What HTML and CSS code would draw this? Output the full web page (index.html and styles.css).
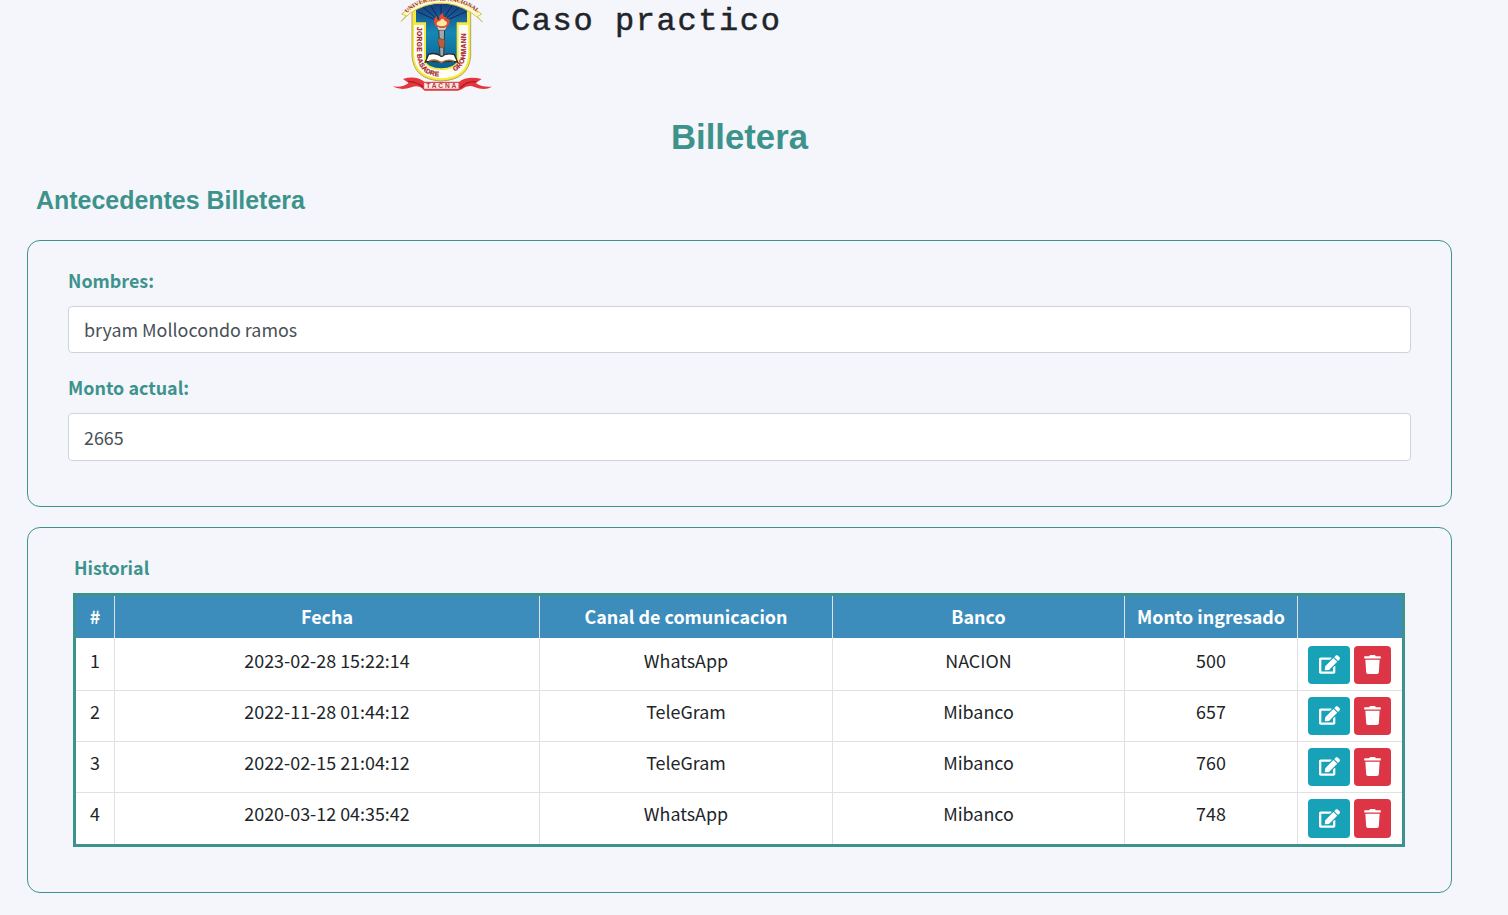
FILE: index.html
```html
<!DOCTYPE html>
<html lang="es">
<head>
<meta charset="utf-8">
<title>Billetera</title>
<link rel="stylesheet" href="styles.css">
</head>
<body>
<svg class="sprite" aria-hidden="true">
  <symbol id="edit" viewBox="0 0 576 512"><path d="M402.600 83.200l90.200 90.200c3.800 3.800 3.800 10 0 13.800L274.400 405.600l-92.800 10.300c-12.400 1.400-22.900-9.100-21.500-21.500l10.300-92.800L388.800 83.200c3.800-3.800 10-3.800 13.800 0zm162-22.900l-48.800-48.800c-15.200-15.200-39.900-15.200-55.200 0l-35.400 35.400c-3.800 3.800-3.800 10 0 13.800l90.200 90.200c3.800 3.800 10 3.800 13.800 0l35.400-35.400c15.200-15.300 15.200-40 0-55.200zM384 346.200V448H64V128h229.800c3.200 0 6.200-1.300 8.500-3.500l40-40c7.600-7.600 2.200-20.500-8.500-20.500H48C21.500 64 0 85.500 0 112v352c0 26.500 21.500 48 48 48h352c26.500 0 48-21.500 48-48V306.200c0-10.700-12.900-16-20.500-8.500l-40 40c-2.200 2.300-3.500 5.300-3.500 8.500z"/></symbol>
  <symbol id="trash" viewBox="0 0 448 512"><path d="M432 32H312l-9.400-18.700A24 24 0 0 0 281.100 0H166.800a23.700 23.700 0 0 0-21.400 13.300L136 32H16A16 16 0 0 0 0 48v32a16 16 0 0 0 16 16h416a16 16 0 0 0 16-16V48a16 16 0 0 0-16-16zM53.200 467a48 48 0 0 0 47.900 45h245.800a48 48 0 0 0 47.900-45L416 128H32z"/></symbol>
</svg>
<header class="top">
  <svg class="crest" viewBox="0 0 345 300">
    <defs>
      <path id="arcTop" d="M66 40Q100 2 168 2Q240 2 279 40"/>
      <path id="arcName" d="M96 81V164Q101 229 168 229Q182 229 196 224"/>
      <path id="arcRight" d="M209 214Q242 197 242 160V70"/>
      <linearGradient id="sky" x1="0" y1="0" x2="0" y2="1"><stop offset="0" stop-color="#173a7c"/><stop offset=".45" stop-color="#1688b5"/><stop offset="1" stop-color="#075d91"/></linearGradient>
    </defs>
    <path d="M81 30H257V168Q252 239 169 243Q86 239 81 168Z" fill="#f4e93c" stroke="#b7a45e" stroke-width="3"/>
    <path d="M87 75H250V166Q245 233 169 235Q92 233 87 166Z" fill="#fffdf2"/>
    <path d="M90 22Q168-5 249 22V70H218V186Q210 206 169 208Q127 206 120 186V70H90Z" fill="url(#sky)" stroke="#f4e93c" stroke-width="6"/>
    <path d="M168 68L98 35M168 68L115 22M168 68L138 18M168 68L168 15M168 68L200 18M168 68L223 22M168 68L244 35" stroke="#15265c" stroke-width="3"/>
    <path d="M50 42Q168-56 290 42L277 50L292 66Q275 49 259 38Q168-20 76 39L48 64L64 47Z" fill="#fff9cb" stroke="#d4c34b" stroke-width="3"/>
    <text class="crest-top"><textPath href="#arcTop">UNIVERSIDAD NACIONAL</textPath></text>
    <path d="M121 186L131 163Q152 156 169 169Q187 157 208 164L218 186Q190 181 169 188Q144 181 121 186Z" fill="#fff" stroke="#292724" stroke-width="4"/>
    <path d="M132 184Q151 175 169 188Q187 176 207 184" fill="none" stroke="#a06937" stroke-width="5"/>
    <path d="M161 84H179L176 168H165Z" fill="#a2a9aa" stroke="#30343a" stroke-width="3"/>
    <path d="M153 75Q171 90 188 75L181 91H160Z" fill="#d7d6cf" stroke="#4c4947" stroke-width="2"/>
    <path d="M151 77Q140 56 157 48Q153 60 163 59Q160 44 174 39Q172 53 184 51Q184 60 193 57Q196 72 184 81Q168 87 151 77Z" fill="#e94b2c"/>
    <path d="M156 75Q152 65 165 62Q173 51 179 62Q191 65 183 76Q169 82 156 75Z" fill="#ffe9a0"/>
    <path d="M159 126Q154 119 165 115L180 121L177 145L164 141Z" fill="#b65e3d" stroke="#713e30" stroke-width="2"/>
    <text class="crest-name"><textPath href="#arcName">JORGE BASADRE</textPath></text>
    <text class="crest-name"><textPath href="#arcRight">GROHMANN</textPath></text>
    <path d="M23 259Q54 263 71 249L54 237Q92 225 119 246H222Q246 227 290 237L272 249Q294 263 321 260Q299 274 268 261Q250 253 230 268L219 272H119Q101 252 79 262Q48 274 23 259Z" fill="#e4363b"/>
    <path d="M69 245Q93 242 118 264M274 246Q249 241 226 264" stroke="#a51f2c" stroke-width="4" fill="none"/>
    <path d="M116 247H222V268H116Z" fill="#fbe9e4" stroke="#d9333d" stroke-width="3"/>
    <text class="crest-town" x="124" y="265" textLength="90">TACNA</text>
  </svg>
  <h2 class="case">Caso practico</h2>
</header>
<main class="content">
  <h1 class="title">Billetera</h1>
  <h3 class="subtitle">Antecedentes Billetera</h3>
  <section class="card details">
    <label class="label" for="nombre">Nombres:</label>
    <input class="field" id="nombre" value="bryam Mollocondo ramos">
    <label class="label second" for="monto">Monto actual:</label>
    <input class="field tall" id="monto" value="2665">
  </section>
  <section class="card history">
    <div class="label">Historial</div>
    <table class="table">
      <colgroup><col class="c1"><col class="c2"><col class="c3"><col class="c4"><col class="c5"><col class="c6"></colgroup>
      <thead><tr><th>#</th><th>Fecha</th><th>Canal de comunicacion</th><th>Banco</th><th>Monto ingresado</th><th></th></tr></thead>
      <tbody>
        <tr><td>1</td><td>2023-02-28 15:22:14</td><td>WhatsApp</td><td>NACION</td><td>500</td><td><div class="actions"><button class="btn edit"><svg><use href="#edit"/></svg></button><button class="btn trash"><svg><use href="#trash"/></svg></button></div></td></tr>
        <tr><td>2</td><td>2022-11-28 01:44:12</td><td>TeleGram</td><td>Mibanco</td><td>657</td><td><div class="actions"><button class="btn edit"><svg><use href="#edit"/></svg></button><button class="btn trash"><svg><use href="#trash"/></svg></button></div></td></tr>
        <tr><td>3</td><td>2022-02-15 21:04:12</td><td>TeleGram</td><td>Mibanco</td><td>760</td><td><div class="actions"><button class="btn edit"><svg><use href="#edit"/></svg></button><button class="btn trash"><svg><use href="#trash"/></svg></button></div></td></tr>
        <tr><td>4</td><td>2020-03-12 04:35:42</td><td>WhatsApp</td><td>Mibanco</td><td>748</td><td><div class="actions"><button class="btn edit"><svg><use href="#edit"/></svg></button><button class="btn trash"><svg><use href="#trash"/></svg></button></div></td></tr>
      </tbody>
    </table>
  </section>
</main>
</body>
</html>
```
FILE: styles.css
```css
* { box-sizing: border-box; }
body {
  margin: 0;
  height: 915px;
  overflow: hidden;
  background: #f4f6fb;
  color: #212529;
  font: 17.9px/26px "Noto Sans CJK SC", sans-serif;
}
.sprite { display: none; }
.top { display: flex; height: 100px; padding-left: 385px; }
.crest { width: 115px; height: 100px; flex: none; }
.crest-top { font: bold 18px "Liberation Serif", serif; fill: #a52a32; }
.crest-name { font: bold 20px "Liberation Sans", sans-serif; letter-spacing: 1px; fill: #a51f32; stroke: #a51f32; stroke-width: .6px; }
.crest-town { font: bold 20px "Liberation Sans", sans-serif; fill: #b93a3f; }
.case {
  margin: 2px 0 0 11px;
  font: 500 32px/40px "Liberation Mono", monospace;
  letter-spacing: 1.6px;
  -webkit-text-stroke: .5px #212529;
  white-space: pre;
}
.content { width: 1425px; margin-left: 27px; }
.title, .subtitle, .label { color: #3d938c; font-weight: bold; }
.title { margin: 0; padding-top: 17px; text-align: center; font: bold 34.7px/40px "Liberation Sans", sans-serif; }
.subtitle { margin: 28px 0 25px 9px; font: bold 24.95px/30px "Liberation Sans", sans-serif; }
.card { border: 1px solid #3d938c; border-radius: 13px; }
.details { height: 267px; padding: 26px 40px 0; }
.label { display: block; height: 26px; }
.second { margin-top: 22px; }
.field {
  display: block;
  width: 100%;
  height: 47px;
  margin-top: 13px;
  padding: 0 15px 1px;
  border: 1px solid #ced4da;
  border-radius: 4px;
  background: #fff;
  color: #495057;
  font: inherit;
}
.second { margin-top: 21px; }
.tall { height: 48px; }
.history { height: 366px; margin-top: 20px; padding: 26px 45px 0; }
.history .label { padding-left: 1px; }
.table {
  width: 1332px;
  margin-top: 13px;
  table-layout: fixed;
  border: 3px solid #3d938c;
  border-spacing: 0;
  background: #fff;
}
.c1 { width: 39px; }
.c2 { width: 425px; }
.c3 { width: 293px; }
.c4 { width: 292px; }
.c5 { width: 173px; }
.c6 { width: 104px; }
th, td { padding: 0; text-align: center; border-right: 1px solid #dee2e6; }
th:last-child, td:last-child { border-right: 0; }
th { height: 42px; padding-bottom: 2px; background: #3c8dbc; color: #fff; font-weight: bold; }
td { height: 51px; padding-top: 7px; vertical-align: top; border-bottom: 1px solid #dee2e6; }
tbody tr:first-child td { height: 53px; padding-top: 9px; }
tbody tr:last-child td { border-bottom: 0; }
td:last-child { padding-top: 6px; }
tbody tr:first-child td:last-child { padding-top: 8px; }
.actions { display: flex; gap: 4px; padding-left: 10px; }
.btn { display: flex; align-items: center; justify-content: center; height: 38px; padding: 0 0 1px; border: 0; border-radius: 4px; color: #fff; }
.btn svg { height: 19px; fill: currentColor; }
.edit { width: 42px; background: #17a2b8; }
.edit svg { width: 21px; }
.trash { width: 37px; background: #dc3545; }
.trash svg { width: 17px; }
tbody tr:last-child .btn { height: 39px; }
```
